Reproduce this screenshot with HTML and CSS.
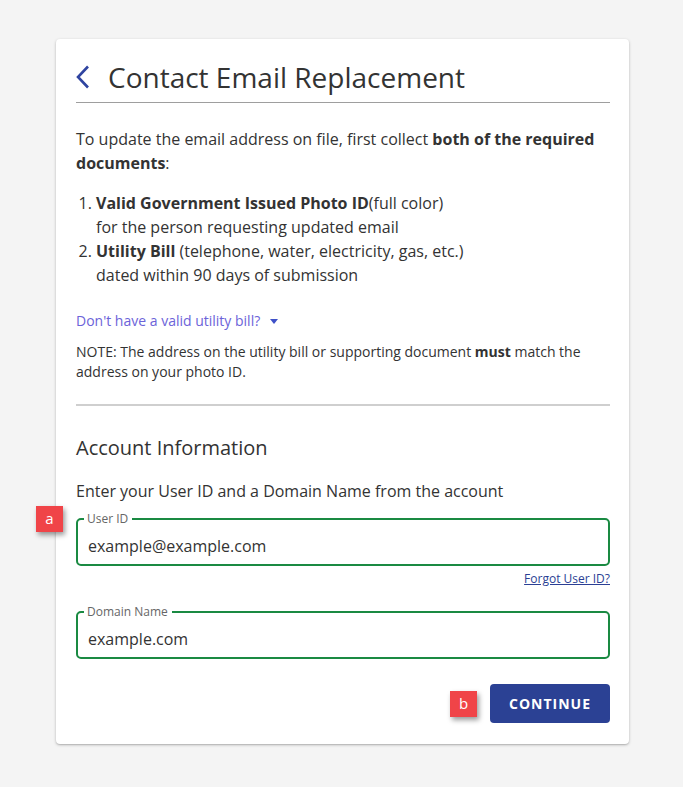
FILE: index.html
```html
<!DOCTYPE html>
<html lang="en">
<head>
<meta charset="utf-8">
<title>Contact Email Replacement</title>
<link rel="stylesheet" href="styles.css">
</head>
<body>
<div class="card">
  <div class="header">
    <svg class="back" width="14" height="24" viewBox="0 0 14 24" aria-hidden="true">
      <polyline points="12,1.5 2,12 12,22.5" fill="none" stroke="#2f44a0" stroke-width="2.6" stroke-linejoin="miter"/>
    </svg>
    <h1 class="title">Contact Email Replacement</h1>
  </div>

  <p class="intro">To update the email address on file, first collect <b>both of the required documents</b>:</p>

  <ol class="docs">
    <li><b>Valid Government Issued Photo ID</b>(full color)<br>for the person requesting updated email</li>
    <li><b>Utility Bill</b> (telephone, water, electricity, gas, etc.)<br>dated within 90 days of submission</li>
  </ol>

  <div class="toggle">Don't have a valid utility bill? <span class="caret"></span></div>

  <p class="note">NOTE: The address on the utility bill or supporting document <b>must</b> match the address on your photo ID.</p>

  <div class="divider"></div>

  <h2 class="section">Account Information</h2>
  <p class="lead">Enter your User ID and a Domain Name from the account</p>

  <div class="field-wrap">
    <span class="badge badge-a">a</span>
    <fieldset class="field">
      <legend class="label">User ID</legend>
      <div class="value">example@example.com</div>
    </fieldset>
  </div>
  <div class="forgot"><a href="#">Forgot User ID?</a></div>

  <div class="field-wrap field-domain">
    <fieldset class="field">
      <legend class="label">Domain Name</legend>
      <div class="value">example.com</div>
    </fieldset>
  </div>

  <div class="actions">
    <span class="badge badge-b">b</span>
    <button class="btn" type="button">CONTINUE</button>
  </div>
</div>
</body>
</html>
```

FILE: styles.css
```css
html, body {
  margin: 0;
  padding: 0;
}
body {
  background: #f4f4f4;
  font-family: "Open Sans", "Noto Sans", sans-serif;
  color: #333333;
  width: 683px;
  height: 787px;
}
.card {
  position: relative;
  box-sizing: border-box;
  width: 573px;
  margin: 39px 0 0 56px;
  padding: 20px 19px 21px 20px;
  background: #ffffff;
  border-radius: 4px;
  box-shadow: 0 1px 3px rgba(0,0,0,0.25), 0 1px 1px rgba(0,0,0,0.08);
}
.header {
  display: flex;
  align-items: center;
  gap: 18px;
  padding: 0 0 7px 0;
  border-bottom: 1px solid #9e9e9e;
}
.back {
  display: block;
}
.title {
  margin: 0;
  font-size: 28px;
  font-weight: 400;
  line-height: 36px;
  color: #333;
}
.intro {
  margin: 24px 0 0 0;
  font-size: 16px;
  line-height: 24px;
}
.docs {
  margin: 16px 0 0 0;
  padding-left: 20px;
  font-size: 16px;
  line-height: 24px;
}
.toggle {
  margin-top: 24px;
  font-size: 14px;
  line-height: 20px;
  color: #6c63d9;
  display: flex;
  align-items: center;
  gap: 10px;
}
.caret {
  display: inline-block;
  width: 0;
  height: 0;
  border-left: 4px solid transparent;
  border-right: 4px solid transparent;
  border-top: 5px solid #3f51c8;
  margin-top: 1px;
}
.note {
  margin: 11px 0 0 0;
  font-size: 14px;
  line-height: 20px;
}
.divider {
  margin-top: 22px;
  height: 2px;
  background: #cfcfcf;
}
.section {
  margin: 28px 0 0 0;
  font-size: 20px;
  font-weight: 400;
  line-height: 28px;
}
.lead {
  margin: 17px 0 0 0;
  font-size: 16px;
  line-height: 24px;
}
.field-wrap {
  position: relative;
  margin-top: 9px;
}
.field {
  margin: 0;
  padding: 0 10px 6px 10px;
  border: 2px solid #1a8a42;
  border-radius: 5px;
  min-width: 0;
}
.label {
  margin-left: -4px;
  padding: 0 4px 0 3px;
  font-size: 12px;
  line-height: 14px;
  color: #666;
}
.value {
  margin-top: 8px;
  font-size: 16px;
  line-height: 24px;
  color: #333;
}
.forgot {
  margin-top: 5px;
  text-align: right;
  font-size: 12px;
  line-height: 16px;
}
.forgot a {
  color: #2b3f94;
  text-decoration: underline;
}
.field-wrap.field-domain {
  margin-top: 18px;
}
.actions {
  position: relative;
  display: flex;
  justify-content: flex-end;
  margin-top: 25px;
}
.btn {
  width: 120px;
  height: 39px;
  border: 0;
  border-radius: 4px;
  background: #2b4194;
  color: #ffffff;
  font-family: "Open Sans", "Noto Sans", sans-serif;
  font-size: 14px;
  font-weight: 700;
  letter-spacing: 1px;
}
.badge {
  position: absolute;
  width: 27px;
  height: 26px;
  background: #f04448;
  color: #fff;
  font-size: 15px;
  line-height: 24px;
  text-align: center;
  box-shadow: 2px 3px 5px rgba(0,0,0,0.4);
}
.badge-a {
  left: -40px;
  top: -6px;
  z-index: 1;
}
.badge-b {
  right: 133px;
  top: 7px;
}
```
